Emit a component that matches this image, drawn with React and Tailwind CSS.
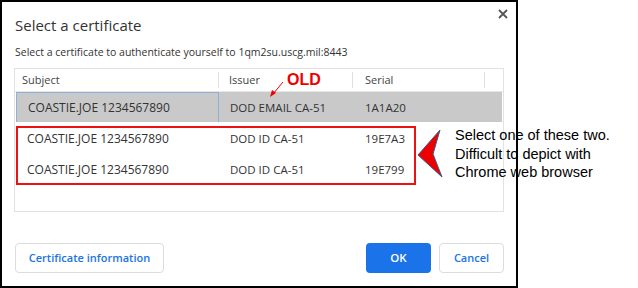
import React from "react";

const font = { fontFamily: '"Open Sans", "Noto Sans", sans-serif' };

function Row({ subject, issuer, serial, selected }) {
  return (
    <div className={`flex h-[31px] items-center text-[11.5px] text-[#333] ${selected ? "bg-[#c9c9c9]" : ""}`}>
      <div className={`flex h-full w-[203px] items-center pl-[11px] text-[12px] ${selected ? "border border-[#8fb0d9]" : ""}`}>{subject}</div>
      <div className="w-[134px] pl-[11px]">{issuer}</div>
      <div className="pl-[12px]">{serial}</div>
    </div>
  );
}

export default function App() {
  return (
    <div className="relative h-[288px] w-[638px] bg-white" style={font}>
      <div className="flex h-[288px] w-[518px] flex-col border-2 border-black bg-white">
        <div className="flex justify-between pl-[13px] pr-[8px] pt-[12px]">
          <div className="text-[15px] leading-[22px] text-[#333]">Select a certificate</div>
          <svg className="-mt-[5px]" width="10" height="10" viewBox="0 0 10 10">
            <path d="M1 1L9 9M9 1L1 9" stroke="#555" strokeWidth="1.8" />
          </svg>
        </div>
        <div className="mt-[8px] pl-[13px] text-[10.5px] leading-[16px] text-[#333]">
          Select a certificate to authenticate yourself to 1qm2su.uscg.mil:8443
        </div>
        <div className="ml-[12px] mt-[8px] flex h-[144px] w-[490px] flex-col border border-[#e2e2e2]">
          <div className="flex h-[23px] items-center border-b border-[#e6e6e6] text-[11px] text-[#444]">
            <div className="w-[203px] pl-[7px]">Subject</div>
            <div className="h-[16px] w-px bg-[#e0e0e0]"></div>
            <div className="w-[133px] pl-[10px]">Issuer</div>
            <div className="h-[16px] w-px bg-[#e0e0e0]"></div>
            <div className="w-[131px] pl-[12px]">Serial</div>
            <div className="h-[16px] w-px bg-[#e0e0e0]"></div>
          </div>
          <div className="px-px">
            <div className="h-[30px] overflow-hidden">
              <Row subject="COASTIE.JOE 1234567890" issuer="DOD EMAIL CA-51" serial="1A1A20" selected />
            </div>
            <div className="mt-[4px] h-[59px] w-[400px] border-2 border-[#ee1111]">
              <div className="-ml-[2px] -mt-[5px]">
                <Row subject="COASTIE.JOE 1234567890" issuer="DOD ID CA-51" serial="19E7A3" />
                <Row subject="COASTIE.JOE 1234567890" issuer="DOD ID CA-51" serial="19E799" />
              </div>
            </div>
          </div>
        </div>
        <div className="mt-[31px] flex items-center justify-between pl-[13px] pr-[12px]">
          <button className="h-[30px] w-[149px] rounded-[4px] border border-[#dadce0] text-[11px] font-semibold text-[#1a73e8]">
            Certificate information
          </button>
          <div className="flex gap-[8px]">
            <button className="h-[30px] w-[65px] rounded-[4px] bg-[#1a73e8] text-[11.5px] font-semibold text-white">OK</button>
            <button className="h-[30px] w-[65px] rounded-[4px] border border-[#dadce0] text-[11px] font-semibold text-[#1a73e8]">Cancel</button>
          </div>
        </div>
      </div>

      <div className="absolute left-[287px] top-[70px] text-[16px] font-bold leading-[20px] text-[#ee0000]" style={{ fontFamily: '"Liberation Sans", sans-serif' }}>
        OLD
      </div>
      <svg className="absolute left-[266px] top-[80px]" width="24" height="20" viewBox="0 0 24 20">
        <path d="M17 2L7 14" stroke="#ee0000" strokeWidth="1" />
        <path d="M4 17L6 10L10 13Z" fill="#ee0000" />
      </svg>
      <svg className="absolute left-[415px] top-[128px]" width="30" height="52" viewBox="0 0 30 52">
        <path d="M25 2L3 27L27 49L18 26Z" fill="#ee0000" stroke="#3a5a8c" strokeWidth="1" strokeLinejoin="round" />
      </svg>
      <div className="absolute left-[455px] top-[126px] text-[14.5px] leading-[18.5px] text-black" style={{ fontFamily: '"Liberation Sans", sans-serif' }}>
        <div>Select one of these two.</div>
        <div>Difficult to depict with</div>
        <div>Chrome web browser</div>
      </div>
    </div>
  );
}
